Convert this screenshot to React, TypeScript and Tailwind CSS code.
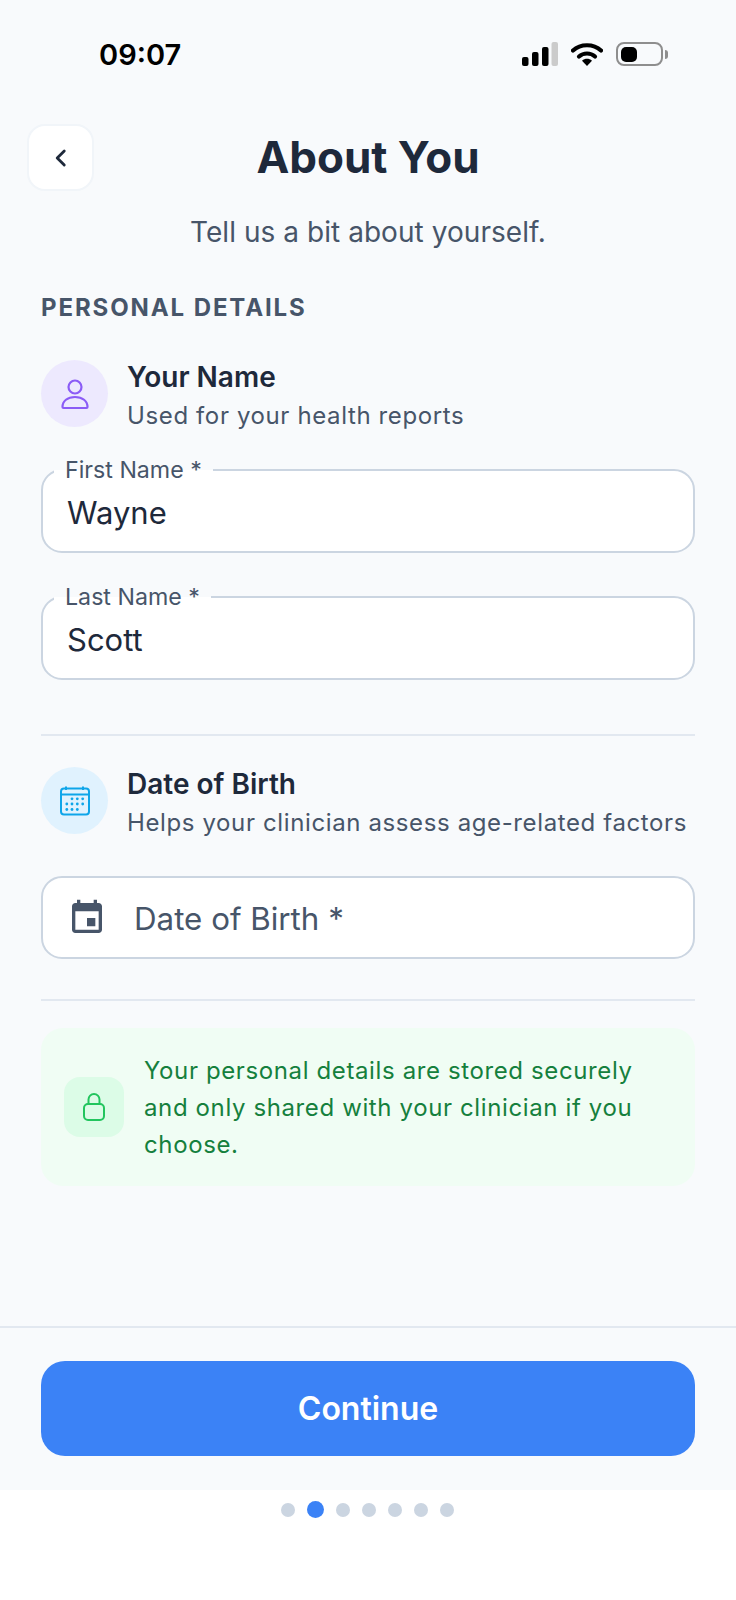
const font = { fontFamily: 'Inter, "Noto Sans", sans-serif' }

function StatusIcons() {
  return (
    <div className="-mt-[2px] flex items-center gap-[13px]">
      <svg width="36" height="24" viewBox="0 0 36 24">
        <rect x="0" y="15" width="6.500" height="9" rx="2" fill="#000" />
        <rect x="10" y="10" width="6.500" height="14" rx="2" fill="#000" />
        <rect x="20" y="5" width="6.500" height="19" rx="2" fill="#000" />
        <rect x="29.500" y="0" width="6.500" height="24" rx="2" fill="#cbcbcb" />
      </svg>
      <svg width="32" height="24" viewBox="0 0 32 24">
        <path d="M2 8.500C9.500 1.500 22.500 1.500 30 8.500" fill="none" stroke="#000" strokeWidth="4.200" strokeLinecap="round" />
        <path d="M8 14.500C12.500 10.500 19.500 10.500 24 14.500" fill="none" stroke="#000" strokeWidth="4.200" strokeLinecap="round" />
        <path d="M11 18.800C14 16.200 18 16.200 21 18.800L16 24Z" fill="#000" />
      </svg>
      <div className="flex items-center gap-[2px]">
        <div className="flex h-[24px] w-[47px] items-center rounded-[8px] border-2 border-[#8e8e8e] p-[3px]">
          <div className="h-[15px] w-[16px] rounded-[5px] bg-black" />
        </div>
        <div className="h-[9px] w-[3px] rounded-r-full bg-[#8e8e8e]" />
      </div>
    </div>
  )
}

function SectionHead({ title, sub, circle, children }: { title: string; sub: string; circle: string; children: React.ReactNode }) {
  return (
    <div className="flex items-start gap-[19px]">
      <div className={`flex h-[67px] w-[67px] shrink-0 items-center justify-center rounded-full ${circle}`}>{children}</div>
      <div>
        <div className="text-[28px] leading-[34px] font-semibold text-[#1e293b]">{title}</div>
        <div className="mt-[7px] text-[24px] leading-[30px] tracking-[0.62px] text-[#475569]">{sub}</div>
      </div>
    </div>
  )
}

function NameField({ label, value, className }: { label: string; value: string; className?: string }) {
  return (
    <div className={`relative flex h-[84px] items-center rounded-[21px] border-2 border-[#cbd5e1] bg-white px-[24px] ${className ?? ''}`}>
      <span className="absolute top-[-15px] left-[11px] bg-[linear-gradient(#f8fafc_50%,#ffffff_50%)] px-[11px] text-[23.200px] leading-[28px] text-[#475569]">
        {label}
      </span>
      <span className="mt-[4px] text-[31px] text-[#1e293b]">{value}</span>
    </div>
  )
}

export default function App() {
  return (
    <div className="min-h-[1600px] bg-white" style={font}>
      <div className="flex h-[1490px] flex-col bg-[#f8fafc]">
        <div className="flex h-[110px] items-center justify-between pr-[68px] pl-[99px]">
          <span className="text-[29px] font-semibold text-black">09:07</span>
          <StatusIcons />
        </div>

        <div className="relative mt-[14px] flex h-[67px] items-center justify-center">
          <button className="absolute left-[27px] flex h-[67px] w-[67px] items-center justify-center rounded-[18px] border-2 border-[#f1f5f9] bg-white">
            <svg width="26" height="26" viewBox="0 0 24 24" fill="none" stroke="#1e293b" strokeWidth="2.600" strokeLinecap="round" strokeLinejoin="round">
              <path d="M15 5.500 8.500 12l6.500 6.500" />
            </svg>
          </button>
          <h1 className="-mt-[2px] text-[44px] font-bold text-[#1e293b]">About You</h1>
        </div>

        <p className="mt-[21px] text-center text-[28px] leading-[40px] tracking-[0.05px] text-[#475569]">Tell us a bit about yourself.</p>

        <div className="mt-[41px] flex flex-col px-[41px]">
          <div className="text-[24px] leading-[30px] font-bold tracking-[1.900px] text-[#475569]">PERSONAL DETAILS</div>

          <div className="mt-[37px]">
            <SectionHead title="Your Name" sub="Used for your health reports" circle="bg-[#ede9fe]">
              <svg width="32" height="32" viewBox="0 0 32 32" fill="none" stroke="#8b5cf6" strokeWidth="2.200">
                <circle cx="16" cy="9" r="6.500" />
                <path d="M3.500 29c0-6 5-10 12.500-10s12.500 4 12.500 10c0 .6-.4 1-1 1h-23c-.6 0-1-.4-1-1Z" strokeLinejoin="round" />
              </svg>
            </SectionHead>
          </div>

          <NameField className="mt-[38px]" label="First Name *" value="Wayne" />
          <NameField className="mt-[43px]" label="Last Name *" value="Scott" />

          <div className="mt-[54px] h-[2px] bg-[#e2e8f0]" />

          <div className="mt-[31px]">
            <SectionHead title="Date of Birth" sub="Helps your clinician assess age-related factors" circle="bg-[#e0f2fe]">
              <svg width="30" height="30" viewBox="0 0 30 30" fill="none" stroke="#0ea5e9" strokeWidth="2">
                <rect x="1" y="2.500" width="28" height="26" rx="3" />
                <path d="M1 8.500h28M6 0.500v3.500M23 0.500v3.500" />
                <g fill="#0ea5e9" stroke="none">
                  <circle cx="12" cy="12.800" r="1.400" />
                  <circle cx="17.300" cy="12.800" r="1.400" />
                  <circle cx="22.700" cy="12.800" r="1.400" />
                  <circle cx="6.800" cy="18" r="1.400" />
                  <circle cx="12" cy="18" r="1.400" />
                  <circle cx="17.300" cy="18" r="1.400" />
                  <circle cx="22.700" cy="18" r="1.400" />
                  <circle cx="6.800" cy="23.500" r="1.400" />
                  <circle cx="12" cy="23.500" r="1.400" />
                  <circle cx="17.300" cy="23.500" r="1.400" />
                </g>
              </svg>
            </SectionHead>
          </div>

          <div className="mt-[38px] flex h-[83px] items-center rounded-[21px] border-2 border-[#cbd5e1] bg-white pl-[24px]">
            <svg width="40" height="40" viewBox="0 0 24 24" fill="#475569">
              <path d="M17 12h-5v5h5v-5zM16 1v2H8V1H6v2H5c-1.110 0-1.990.9-1.990 2L3 19c0 1.100.89 2 2 2h14c1.100 0 2-.9 2-2V5c0-1.100-.9-2-2-2h-1V1h-2zm3 18H5V8h14v11z" />
            </svg>
            <span className="mt-[4px] ml-[27px] text-[31.300px] text-[#475569]">Date of Birth *</span>
          </div>

          <div className="mt-[40px] h-[2px] bg-[#e2e8f0]" />

          <div className="mt-[27px] flex h-[158px] items-center gap-[20px] rounded-[22px] bg-[#f0fdf4] pr-[20px] pl-[23px]">
            <div className="flex h-[60px] w-[60px] shrink-0 items-center justify-center rounded-[16px] bg-[#dcfce7]">
              <svg width="24" height="30" viewBox="0 0 24 30" fill="none" stroke="#22c55e" strokeWidth="2">
                <rect x="2" y="12" width="20" height="16" rx="4" />
                <path d="M6.500 12V7.500a5.500 5.500 0 0 1 11 0V12" />
              </svg>
            </div>
            <p className="text-[24px] leading-[37px] tracking-[0.62px] text-[#15803d]">
              Your personal details are stored securely and only shared with your clinician if you choose.
            </p>
          </div>
        </div>

        <div className="mt-auto border-t-2 border-[#e2e8f0] px-[41px] pt-[33px] pb-[34px]">
          <button className="h-[95px] w-full rounded-[24px] bg-[#3b82f6] text-[32px] font-semibold text-white">Continue</button>
        </div>
      </div>

      <div className="mt-[11px] flex items-center justify-center gap-[12px] pr-[1px]">
        <span className="h-[14px] w-[14px] rounded-full bg-[#cbd5e1]" />
        <span className="h-[17px] w-[17px] rounded-full bg-[#3b82f6]" />
        {[0, 1, 2, 3, 4].map((i) => (
          <span key={i} className="h-[14px] w-[14px] rounded-full bg-[#cbd5e1]" />
        ))}
      </div>
    </div>
  )
}
